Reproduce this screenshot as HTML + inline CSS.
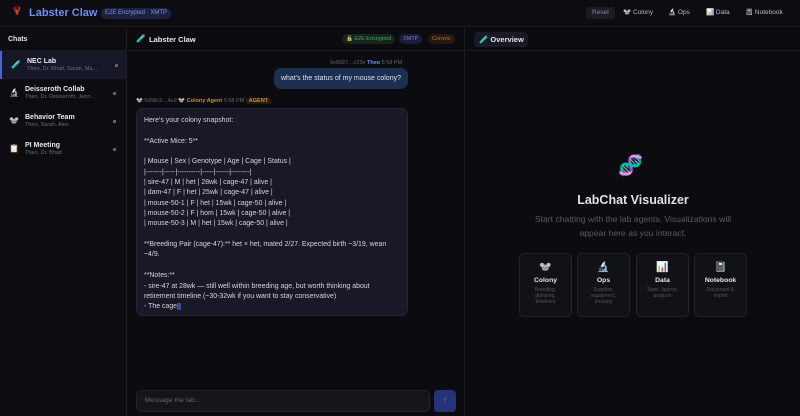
<!DOCTYPE html><html><head><meta charset="utf-8"><style>
*{box-sizing:border-box;margin:0;padding:0}
body{width:800px;height:416px;background:#0b0b10;font-family:"Liberation Sans","Noto Sans CJK SC",sans-serif;color:#e5e5ea;overflow:hidden;position:relative;font-size:7px}
.top{position:absolute;left:0;top:0;width:800px;height:27px;border-bottom:1px solid #1c1c24;background:#0c0c11}
.logo{position:absolute;left:12px;top:6px;font-size:8px;color:#d08a2a}
.title{position:absolute;left:29px;top:7px;font-size:11px;font-weight:bold;color:#6f8ff0}
.pill{position:absolute;left:101px;top:8px;height:11px;padding:0 4px;border-radius:6px;background:#1c2140;color:#7f93e8;font-size:6px;line-height:11px}
.nav{position:absolute;top:7px;font-size:6.5px;color:#b8b8c4;line-height:12px}
.side{position:absolute;left:0;top:28px;width:127px;height:388px;border-right:1px solid #1c1c24;background:#0c0c11}
.side h4{font-size:7px;padding:8px 8px;height:23px;color:#e5e5ea;border-bottom:1px solid #1c1c24}
.ci{height:28px;position:relative;padding:7px 0 0 25px}
.ci.act{background:#161827;border-left:2px solid #4a63d0}
.ci b{display:block;font-size:7px;color:#e8e8ee}
.ci span{display:block;font-size:5.5px;color:#6a6a76;margin-top:1px}
.ci i{position:absolute;left:9px;top:9px;font-style:normal;font-size:8px}
.ci em{position:absolute;left:113px;top:13px;width:3px;height:3px;background:#8a5a2a}
.chat{position:absolute;left:128px;top:28px;width:337px;height:388px;border-right:1px solid #1c1c24}
.ch{height:23px;border-bottom:1px solid #1c1c24;position:relative}
.ch .t{position:absolute;left:21px;top:7px;font-size:7.5px;font-weight:bold}
.tag{position:absolute;top:6px;height:10px;line-height:10px;font-size:5.5px;padding:0 4px;border-radius:5px}
.meta{position:absolute;font-size:5.5px;color:#666}
.ub{position:absolute;left:274px;top:68px;width:134px;height:21px;background:#1b3050;border-radius:7px;font-size:7px;color:#d8e2f2;line-height:21px;text-align:center}
.ab{position:absolute;left:136px;top:108px;width:272px;height:208px;background:#181826;border:1px solid #252535;border-radius:7px;padding:7px 7px;font-size:6.95px;line-height:10.35px;color:#d6d6de}
.in{position:absolute;left:136px;top:390px;width:294px;height:22px;background:#15151c;border:1px solid #23232d;border-radius:5px;font-size:6.8px;color:#666;padding:6px 8px}
.send{position:absolute;left:434px;top:390px;width:22px;height:22px;background:#263379;border-radius:4px;color:#8a9ad8;text-align:center;line-height:22px;font-size:7px}
.ov{position:absolute;left:474px;top:32px;width:54px;height:15px;background:#191a25;border-radius:4px;font-size:7.5px;font-weight:bold;line-height:15px;padding-left:5px}
.card{position:absolute;top:253px;width:53px;height:64px;border:1px solid #22222c;background:#111118;border-radius:5px;text-align:center}
.card i{display:block;font-style:normal;font-size:10px;margin-top:8px}
.card b{display:block;font-size:6.8px;margin-top:4px;color:#e5e5ea}
.card span{display:block;font-size:5px;color:#555;line-height:6px;margin-top:3px}
</style></head><body>
<div class="top">
<div class="logo">🦞</div><div class="title">Labster Claw</div><div class="pill">E2E Encrypted · XMTP</div>
<div class="nav" style="left:586px;background:#1b1b28;padding:0 6px;border-radius:3px;color:#888">Reset</div>
<div class="nav" style="left:623px">🐭 Colony</div>
<div class="nav" style="left:668px">🔬 Ops</div>
<div class="nav" style="left:706px">📊 Data</div>
<div class="nav" style="left:745px">📓 Notebook</div>
</div>
<div class="side"><h4>Chats</h4>
<div class="ci act"><i>🧪</i><b>NEC Lab</b><span>Theo, Dr. Bhatt, Sarah, Ma...</span><em></em></div>
<div class="ci"><i>🔬</i><b>Deisseroth Collab</b><span>Theo, Dr. Deisseroth, Jenn...</span><em></em></div>
<div class="ci"><i>🐭</i><b>Behavior Team</b><span>Theo, Sarah, Alex</span><em></em></div>
<div class="ci"><i>📋</i><b>PI Meeting</b><span>Theo, Dr. Bhatt</span><em></em></div>
</div>
<div class="chat"><div class="ch"><span style="position:absolute;left:8px;top:6px;font-size:8px">🧪</span><div class="t">Labster Claw</div>
<div class="tag" style="left:214px;background:#17231d;color:#3fae5e">🔒 E2E Encrypted</div>
<div class="tag" style="left:271px;background:#1c1c38;color:#7a7ae0">XMTP</div>
<div class="tag" style="left:300px;background:#261a10;color:#b07030">Convos</div></div></div>
<div class="meta" style="left:330px;top:60px">0x0027…c23e <b style="color:#6f8ff0">Theo</b> 5:58 PM</div>
<div class="ub">what's the status of my mouse colony?</div>
<div class="meta" style="left:136px;top:98px">🐭 0x58c3…4e2 <b style="color:#d08a2a">🐭 Colony Agent</b> 5:58 PM <span style="background:#2a1c0c;color:#d08a2a;padding:0 3px;border-radius:2px;font-weight:bold">AGENT</span></div>
<div class="ab">Here's your colony snapshot:<br><br>**Active Mice: 5**<br><br>| Mouse | Sex | Genotype | Age | Cage | Status |<br>|-------|-----|----------|-----|------|--------|<br>| sire-47 | M | het | 28wk | cage-47 | alive |<br>| dam-47 | F | het | 25wk | cage-47 | alive |<br>| mouse-50-1 | F | het | 15wk | cage-50 | alive |<br>| mouse-50-2 | F | hom | 15wk | cage-50 | alive |<br>| mouse-50-3 | M | het | 15wk | cage-50 | alive |<br><br>**Breeding Pair (cage-47):** het × het, mated 2/27. Expected birth ~3/19, wean<br>~4/9.<br><br>**Notes:**<br>- sire-47 at 28wk — still well within breeding age, but worth thinking about<br>retirement timeline (~30-32wk if you want to stay conservative)<br>- The cage<span style="background:#3a4a9a">&nbsp;&nbsp;</span></div>
<div class="in">Message the lab...</div><div class="send">↑</div>
<div style="position:absolute;left:466px;top:50px;width:334px;border-top:1px solid #1c1c24"></div>
<div class="ov">🧪 Overview</div>
<div style="position:absolute;left:618px;top:153px;font-size:20px">🧬</div>
<div style="position:absolute;left:466px;top:193px;width:334px;text-align:center;font-size:12.5px;font-weight:bold;color:#e0e0e6">LabChat Visualizer</div>
<div style="position:absolute;left:466px;top:213px;width:334px;text-align:center;font-size:8.6px;line-height:13.5px;color:#5a5a66">Start chatting with the lab agents. Visualizations will<br>appear here as you interact.</div>
<div class="card" style="left:519px"><i>🐭</i><b>Colony</b><span>Breeding,<br>planning,<br>timelines</span></div>
<div class="card" style="left:577px"><i>🔬</i><b>Ops</b><span>Supplies,<br>equipment,<br>tracking</span></div>
<div class="card" style="left:636px"><i>📊</i><b>Data</b><span>Stats, figures,<br>analysis</span></div>
<div class="card" style="left:694px"><i>📓</i><b>Notebook</b><span>Document &amp;<br>export</span></div>
</body></html>
